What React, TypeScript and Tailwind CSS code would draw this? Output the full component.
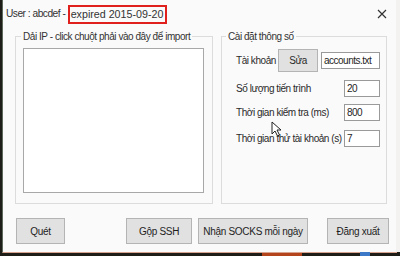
import React from "react";

const font = { fontFamily: '"Liberation Sans", Arial, sans-serif' };

function Btn({ w, label }: { w: string; label: string }) {
  return (
    <div
      className={`${w} h-[26px] flex items-center justify-center bg-[#e1e1e1] border border-[#b4b4b4] text-[10px] tracking-[-0.3px] text-[#1e1e1e]`}
    >
      {label}
    </div>
  );
}

function Field({ w, value }: { w: string; value: string }) {
  return (
    <div
      className={`${w} h-[17px] flex items-center pl-[2px] bg-white border border-[#9a9a9a] text-[10px] tracking-[-0.5px] text-[#1e1e1e] whitespace-nowrap overflow-hidden`}
    >
      {value}
    </div>
  );
}

export default function App() {
  return (
    <div
      className="w-[400px] h-[256px] bg-[#1f1d18] relative overflow-hidden"
      style={font}
    >
      {/* desktop behind, right side */}
      <div className="absolute right-0 top-0 w-[4px] h-[252px] bg-[#f4f2f0]" />
      {/* bottom taskbar bits */}
      <div className="absolute left-[262px] top-[253px] w-[40px] h-[3px] bg-[#b4441c]" />
      <div className="absolute left-[360px] top-[252px] w-[10px] h-[4px] bg-[#3c78c8]" />

      <div className="ml-[2px] w-[395px] h-[253px] border-l border-l-[#5f6a5c] border-r border-r-[#d7a38f] border-b border-b-[#d7a38f] bg-[#fafafa] flex flex-col">
        {/* title bar */}
        <div className="h-[27px] flex items-center pl-[3px] pr-[9px] text-[#333]">
          <span className="whitespace-pre text-[10.2px] tracking-[-0.5px]">User : abcdef - </span>
          <span className="border-2 border-[#e0201c] h-[19px] flex items-center pl-[1px] pr-[2px] mt-[1px] text-[10.7px]">
            expired 2015-09-20
          </span>
          <div className="flex-1" />
          <svg width="10" height="10" viewBox="0 0 10 10" className="mt-[1px]">
            <path d="M1 1 L9 9 M9 1 L1 9" stroke="#333" strokeWidth="1.2" />
          </svg>
        </div>

        {/* group boxes */}
        <div className="flex gap-[8px] pl-[12px] mt-[3px]">
          <fieldset className="w-[198px] h-[174px] border border-[#dcdcdc] pl-[7px] pr-[8px]">
            <legend className="ml-[-2px] px-[2px] text-[10px] tracking-[-0.45px] leading-[13px] text-[#333]">
              Dải IP - click chuột phải vào đây để import
            </legend>
            <div className="mt-[5px] w-[181px] h-[145px] bg-white border border-[#a8a8a8]" />
          </fieldset>

          <fieldset className="w-[166px] h-[174px] border border-[#dcdcdc] pl-[14px] pr-[6px] text-[10px] tracking-[-0.45px] text-[#2a2a2a]">
            <legend className="ml-[-10px] px-[2px] text-[10px] leading-[13px] text-[#333]">
              Cài đặt thông số
            </legend>
            <div className="mt-[6px] flex items-center h-[23px]">
              <span className="w-[42px] whitespace-nowrap">Tài khoản</span>
              <div className="w-[40px] h-[23px] flex items-center justify-center bg-[#e1e1e1] border border-[#b4b4b4]">
                Sửa
              </div>
              <div className="ml-[3px]">
                <Field w="w-[59px]" value="accounts.txt" />
              </div>
            </div>
            <div className="mt-[8px] flex items-center justify-between">
              <span className="whitespace-nowrap">Số lượng tiến trình</span>
              <Field w="w-[36px]" value="20" />
            </div>
            <div className="mt-[7px] flex items-center justify-between">
              <span className="whitespace-nowrap">Thời gian kiểm tra (ms)</span>
              <Field w="w-[36px]" value="800" />
            </div>
            <div className="mt-[9px] flex items-center justify-between">
              <span className="whitespace-nowrap">Thời gian thử tài khoản (s)</span>
              <Field w="w-[36px]" value="7" />
            </div>
          </fieldset>
        </div>

        {/* buttons */}
        <div className="flex pl-[13px] mt-[14px]">
          <Btn w="w-[49px]" label="Quét" />
          <div className="ml-[61px]">
            <Btn w="w-[66px]" label="Gộp SSH" />
          </div>
          <div className="ml-[6px]">
            <Btn w="w-[110px]" label="Nhận SOCKS mỗi ngày" />
          </div>
          <div className="ml-[19px]">
            <Btn w="w-[62px]" label="Đăng xuất" />
          </div>
        </div>
      </div>

      {/* mouse cursor */}
      <svg
        className="absolute left-[271px] top-[121px]"
        width="12"
        height="17"
        viewBox="0 0 12 17"
      >
        <path
          d="M1 1 L1 13 L4 10 L6.5 15 L8.5 14 L6 9 L10 9 Z"
          fill="#fff"
          stroke="#222"
          strokeWidth="1"
        />
      </svg>
    </div>
  );
}
